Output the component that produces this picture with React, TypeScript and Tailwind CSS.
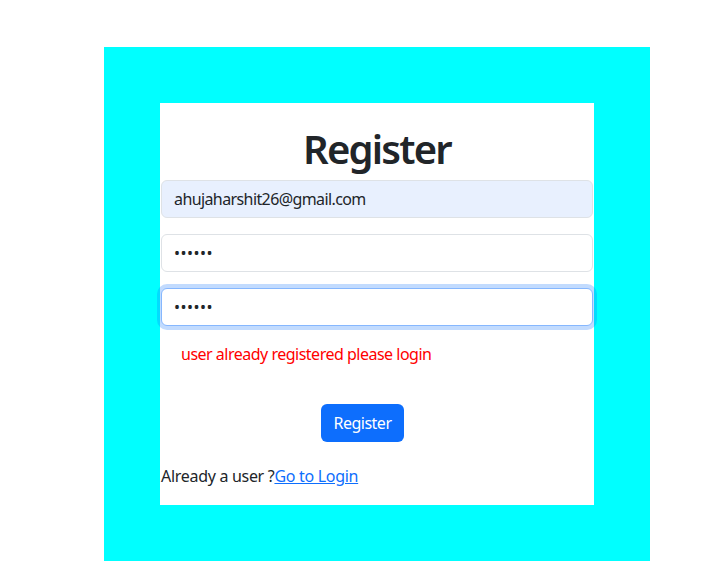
import React from "react";

export default function App() {
  const font = { fontFamily: '"Noto Sans", "Open Sans", sans-serif' };
  return (
    <div className="w-[726px] h-[587px] bg-white" style={font}>
      <div className="pt-[47px] pl-[104px]">
        <div className="w-[546px] h-[514px] bg-[#00ffff] p-[56px]">
          <div className="w-[434px] h-[402px] bg-white flex flex-col text-[#212529] tracking-[-0.5px]">
            <h1 className="mt-[22px] mb-[7px] text-center text-[40px] leading-[48px] font-semibold tracking-[-1.8px]">Register</h1>
            <div className="px-px flex flex-col gap-[16px]">
              <input
                readOnly
                value="ahujaharshit26@gmail.com"
                className="h-[38px] w-full rounded-[6px] border border-[#dee2e6] bg-[#e8f0fe] px-[12px] text-[16px] tracking-[-0.6px] text-[#212529] outline-none"
              />
              <input
                readOnly
                type="password"
                value="123456"
                className="h-[38px] w-full rounded-[6px] border border-[#dee2e6] bg-white px-[12px] text-[16px] tracking-[0.5px] text-[#212529] outline-none"
              />
              <input
                readOnly
                type="password"
                value="123456"
                className="h-[38px] w-full rounded-[6px] border border-[#86b7fe] bg-white px-[12px] text-[16px] tracking-[0.5px] text-[#212529] outline-none shadow-[0_0_0_4px_rgba(13,110,253,0.25)]"
              />
            </div>
            <p className="mt-[16px] pl-[21px] text-[16px] leading-[24px] text-[#ff0000]">user already registered please login</p>
            <div className="mt-[38px] flex justify-center pr-[29px]">
              <button className="h-[38px] w-[83px] rounded-[6px] bg-[#0d6efd] text-[16px] text-white">Register</button>
            </div>
            <p className="mt-[22px] pl-px text-[16px] leading-[24px] tracking-[-0.3px]">
              Already a user ?<a href="#" className="text-[#0d6efd] underline">Go to Login</a>
            </p>
          </div>
        </div>
      </div>
    </div>
  );
}
